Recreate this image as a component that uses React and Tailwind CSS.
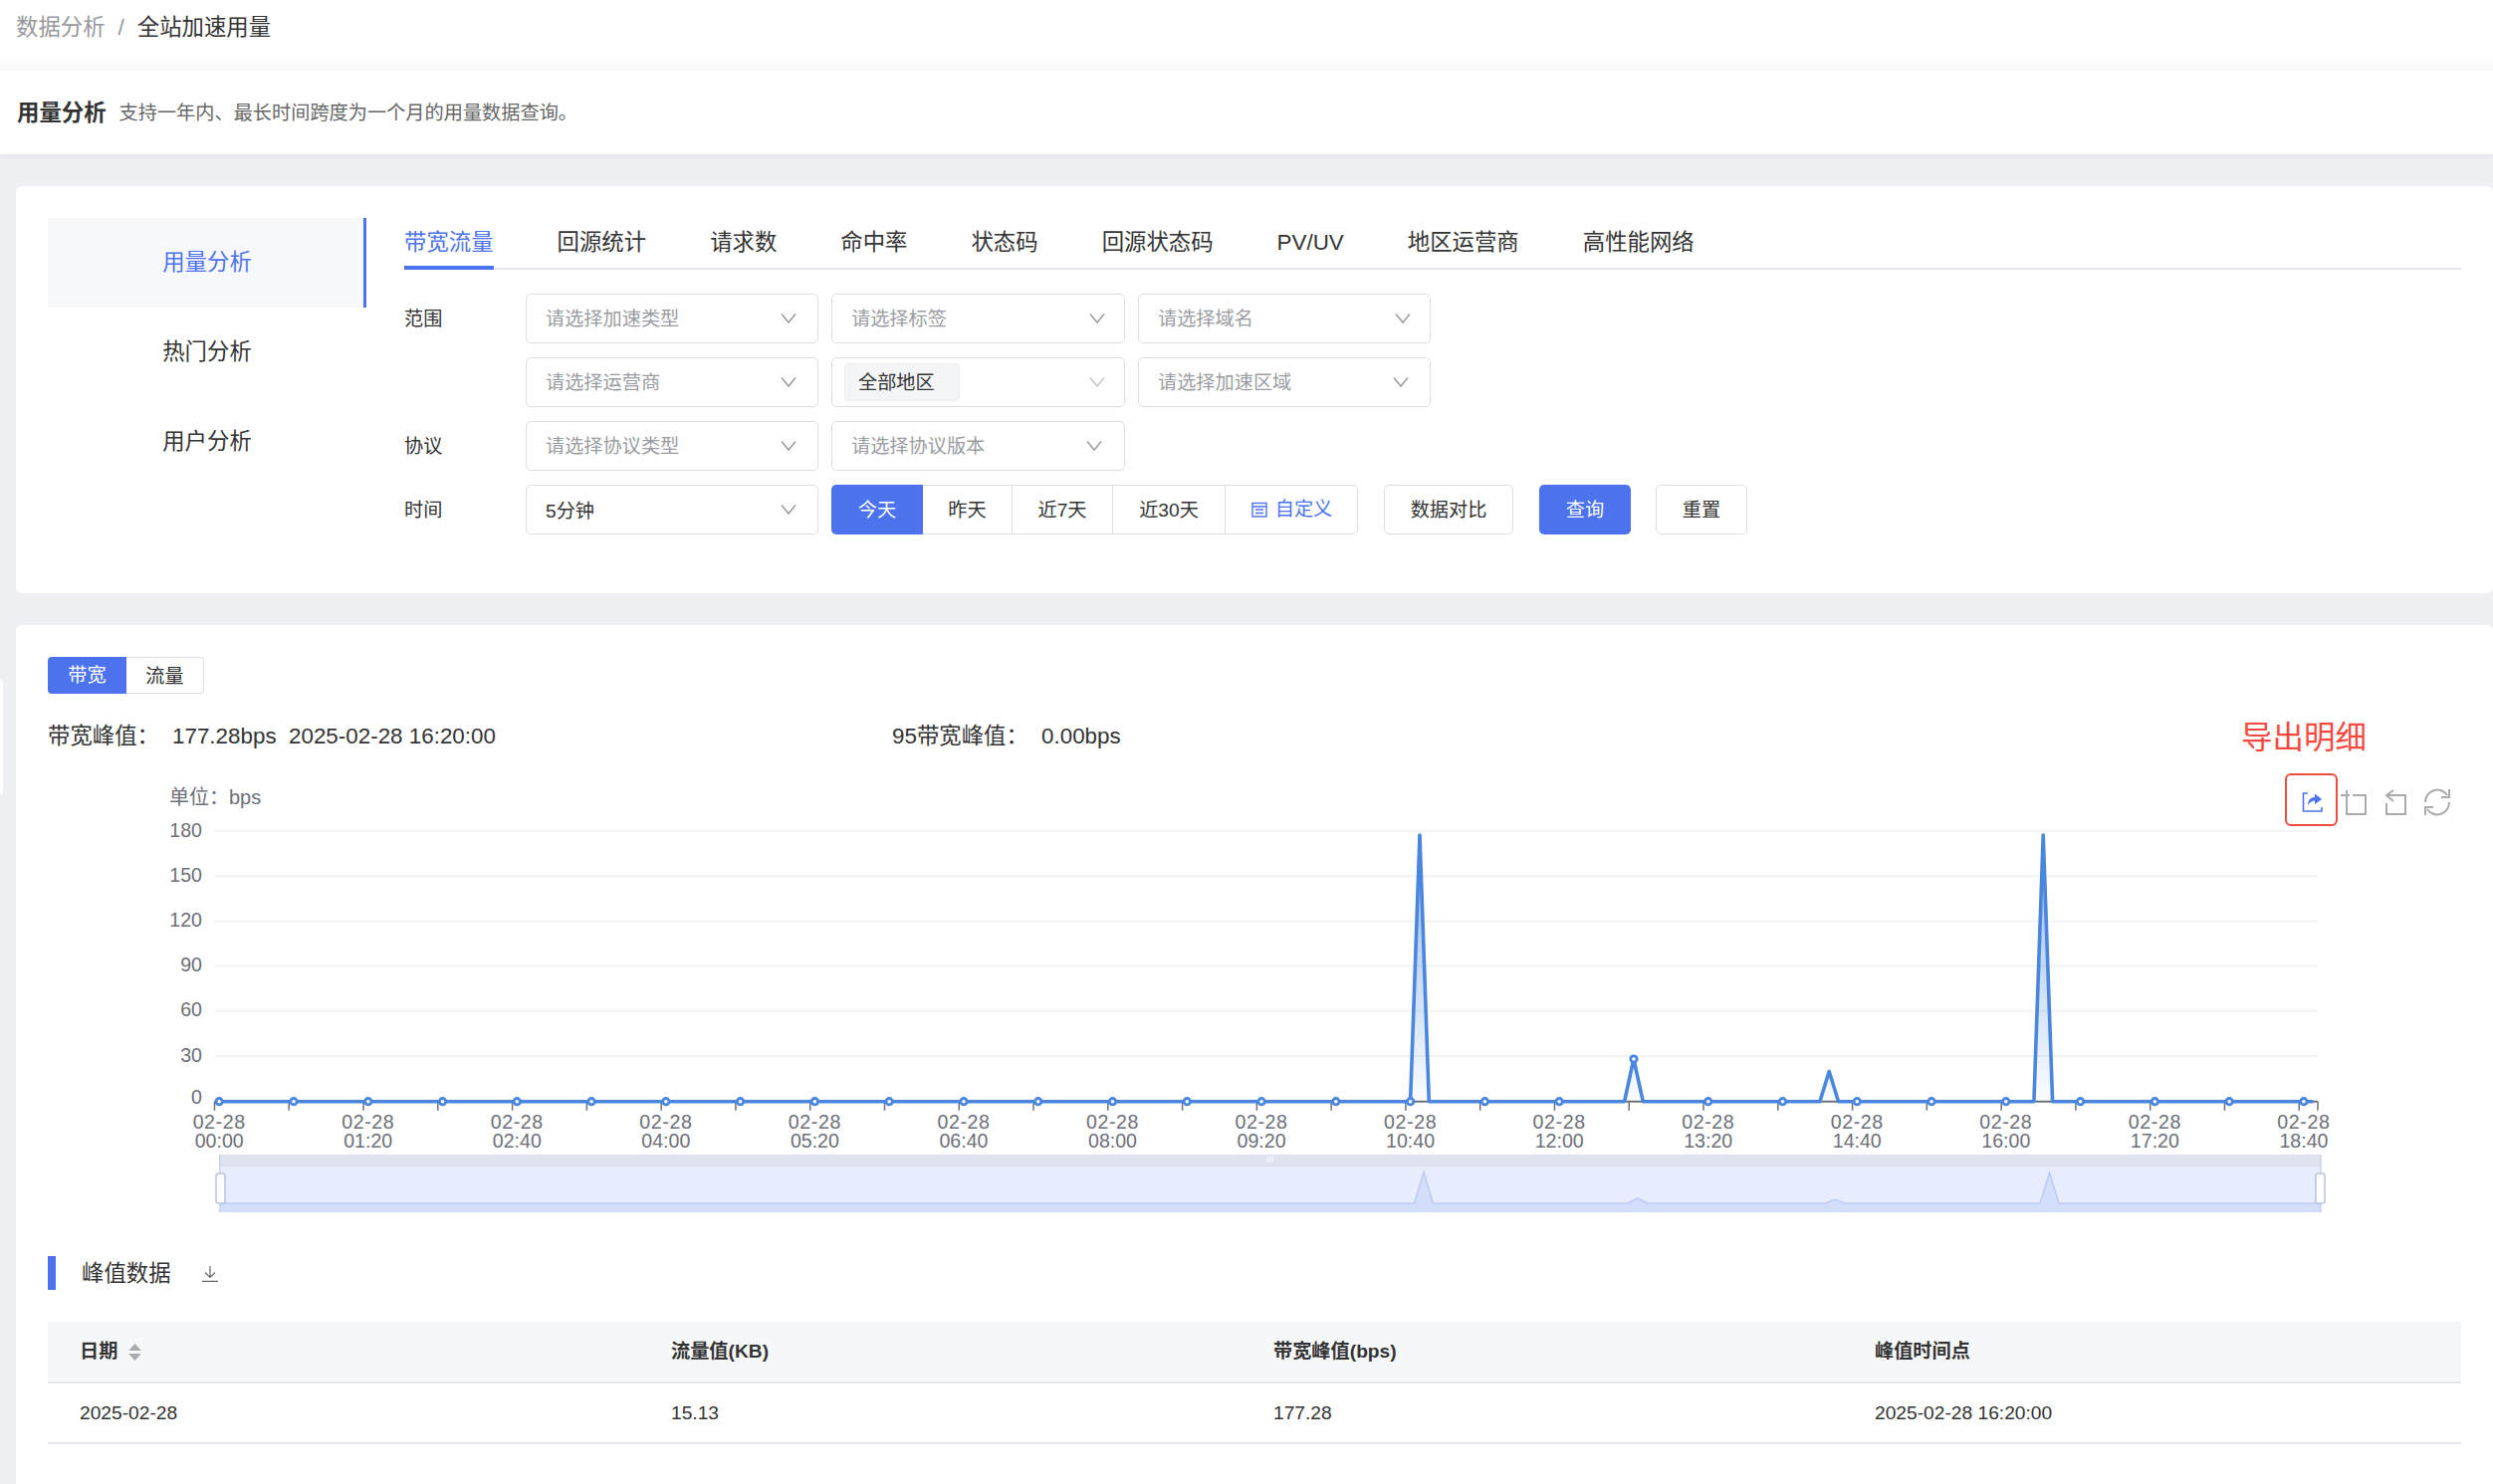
const TABS = ['带宽流量', '回源统计', '请求数', '命中率', '状态码', '回源状态码', 'PV/UV', '地区运营商', '高性能网络'];
const SIDE = ['用量分析', '热门分析', '用户分析'];
const STEP = 9.347;
const X0 = 220.2;
const Y0 = 1106.7;
const PER = 1.5094;
const PEAKS = { 129: 177.28, 152: 28.3, 173: 20, 196: 177.28 };
const YTICKS = [180, 150, 120, 90, 60, 30, 0];
const LABELS = ['00:00', '01:20', '02:40', '04:00', '05:20', '06:40', '08:00', '09:20', '10:40', '12:00', '13:20', '14:40', '16:00', '17:20', '18:40'];

const pts = Array.from({ length: 226 }, (_, i) => [X0 + i * STEP, Y0 - (PEAKS[i] || 0) * PER]);
const linePath = pts.map((p, i) => `${i ? 'L' : 'M'}${p[0].toFixed(1)} ${p[1].toFixed(1)}`).join(' ');
const areaPath = `${linePath} L${pts[225][0].toFixed(1)} ${Y0} L${X0} ${Y0} Z`;

function Chevron({ right = 'mr-[14px]', light }) {
  return (
    <svg viewBox="0 0 18 12" className={`w-[18px] h-[12px] ${right}`} fill="none" stroke={light ? '#c4c6cb' : '#9a9ca1'} strokeWidth="1.5">
      <path d="M2 1.5 L9 10 L16 1.5" />
    </svg>
  );
}

function Select({ text, width = 'w-[295px]', right, value, light, tag }) {
  return (
    <div className={`${width} h-[50px] flex items-center justify-between border border-[#dcdfe6] rounded-[5px] bg-white`}>
      {tag ? (
        <span className="ml-[12px] h-[38px] w-[116px] flex items-center pl-[13px] pt-[2px] rounded-[4px] bg-[#f4f5f7] border border-[#eceef2] text-[#333]">{text}</span>
      ) : (
        <span className={`ml-[19px] ${value ? 'text-[#333] pt-[4px]' : 'text-[#9a9ca1] pt-[2px]'}`}>{text}</span>
      )}
      <Chevron right={right} light={light} />
    </div>
  );
}

function Row({ label, children }) {
  return (
    <div className="flex items-center h-[50px]">
      <span className="w-[122px] text-[#333] pt-[2px]">{label}</span>
      <div className="flex gap-[13px] items-center">{children}</div>
    </div>
  );
}

function Chart() {
  return (
    <svg viewBox="16 770 2488 470" className="block w-[2488px] h-[470px]" fill="none">
      <defs>
        <linearGradient id="areaFill" gradientUnits="userSpaceOnUse" x1="0" y1="839" x2="0" y2="1106">
          <stop offset="0" stopColor="#4a89dc" stopOpacity="0.6" />
          <stop offset="1" stopColor="#4a89dc" stopOpacity="0.03" />
        </linearGradient>
      </defs>
      <text x="170" y="808" fontSize="20" fill="#6e7079">单位：bps</text>
      {YTICKS.map((v, i) => (
        <g key={v}>
          {v > 0 && <line x1="215.5" x2="2328" y1={835 + i * 45.2} y2={835 + i * 45.2} stroke="#f2f3f4" strokeWidth="2" />}
          <text x="203" y={840.5 + i * 45.2 - (v === 0 ? 3 : 0)} fontSize="19.6" fill="#6e7079" textAnchor="end">{v}</text>
        </g>
      ))}
      <line x1="215.5" x2="2328" y1={Y0} y2={Y0} stroke="#6e7079" strokeWidth="2" />
      {Array.from({ length: 29 }, (_, i) => 215.5 + i * 8 * STEP).concat(2328).map((x) => (
        <line key={x} x1={x} x2={x} y1={Y0} y2={Y0 + 9} stroke="#6e7079" strokeWidth="1.5" />
      ))}
      {LABELS.map((t, i) => (
        <text key={t} x={X0 + i * 16 * STEP} fontSize="19.6" fill="#6e7079" textAnchor="middle">
          <tspan x={X0 + i * 16 * STEP} y="1133.5" letterSpacing="0.6">02-28</tspan>
          <tspan x={X0 + i * 16 * STEP} y="1152.5">{t}</tspan>
        </text>
      ))}
      <path d={areaPath} fill="url(#areaFill)" />
      <path d={linePath} stroke="#4a86dd" strokeWidth="3.6" strokeLinejoin="round" />
      {pts.filter((_, i) => i % 8 === 0).map((p) => (
        <circle key={p[0]} cx={p[0]} cy={p[1]} r="3.2" fill="#fff" stroke="#4a86dd" strokeWidth="2.8" />
      ))}

      {/* data zoom */}
      <rect x="220" y="1160" width="2111" height="11" fill="#dee3ef" />
      <rect x="220" y="1171" width="2111" height="47" fill="#e7edfd" />
      <path d="M220 1218 V1209 H1420.5 L1430 1178 L1439.5 1209 H1635 L1645 1204 L1655 1209 H1833 L1843 1205 L1853 1209 H2049 L2058.6 1178 L2068 1209 H2331 V1218 Z" fill="#d3dffa" />
      <path d="M220 1209 H1420.5 L1430 1178 L1439.5 1209 H1635 L1645 1204 L1655 1209 H1833 L1843 1205 L1853 1209 H2049 L2058.6 1178 L2068 1209 H2331" stroke="#bccdf5" strokeWidth="1.6" />
      <line x1="220" x2="2331" y1="1171" y2="1171" stroke="#d6dcec" strokeWidth="1.5" />
      <line x1="221" x2="221" y1="1160" y2="1218" stroke="#cbd3e8" strokeWidth="1.5" />
      <line x1="2331" x2="2331" y1="1160" y2="1218" stroke="#cbd3e8" strokeWidth="1.5" />
      <path d="M1273 1162 V1168 M1275.5 1162 V1168 M1278 1162 V1168" stroke="#fff" strokeWidth="1" />
      <rect x="217" y="1179" width="9" height="30" rx="2.5" fill="#fff" stroke="#b8c4e0" strokeWidth="1.5" />
      <rect x="2326" y="1179" width="9" height="30" rx="2.5" fill="#fff" stroke="#b8c4e0" strokeWidth="1.5" />

      {/* toolbox */}
      <path d="M2318 797 H2313.5 V815 H2332 V811" stroke="#4c73ed" strokeWidth="1.6" />
      <path d="M2318 809 C2318 804 2321 801 2325 801 V797.5 L2332 803 L2325 808 V804.5 C2322 804.5 2320 806 2318 809 Z" fill="#4c73ed" />
      <path d="M2357 794 V818 H2376 V799 H2363 M2351 799 H2360" stroke="#aaa" strokeWidth="2" />
      <path d="M2404 794 L2397 799 L2404 805 M2397 799 H2416 V818 H2397 V807" stroke="#aaa" strokeWidth="2" />
      <path d="M2436 806 A12 12 0 0 1 2458 799 M2460 793 V801 H2452 M2460 806 A12 12 0 0 1 2438 813 M2436 819 V811 H2444" stroke="#aaa" strokeWidth="2" />
    </svg>
  );
}

export default function App() {
  return (
    <div className="relative w-[2504px] h-[1491px] overflow-hidden bg-[#eef0f4] text-[19.2px] leading-[28px] text-[#333] [font-family:'Liberation_Sans','Noto_Sans_CJK_SC',sans-serif]">
      <div className="absolute left-0 top-[683px] w-[3px] h-[115px] bg-white rounded-r-[3px]" />

      <div className="h-[71px] bg-gradient-to-b from-white from-80% to-[#f8f8f8] pl-[16px] pt-[14px] text-[22.4px] flex items-start gap-[13px]">
        <span className="text-[#97989b]">数据分析</span>
        <span className="text-[#97989b]">/</span>
        <span className="text-[#333]">全站加速用量</span>
      </div>

      <div className="h-[84px] bg-white shadow-[0_2px_6px_rgba(0,0,0,0.05)] flex items-center pt-[2px] pl-[17px] gap-[13px]">
        <span className="text-[22.4px] font-bold text-[#333]">用量分析</span>
        <span className="text-[#666]">支持一年内、最长时间跨度为一个月的用量数据查询。</span>
      </div>

      <div className="mt-[32px] ml-[16px] h-[409px] bg-white rounded-[6px] pt-[32px] pl-[32px] pr-[32px] flex">
        <div className="w-[320px] shrink-0 text-[22.4px]">
          {SIDE.map((s, i) => (
            <div key={s} className={`h-[90px] flex items-center justify-center ${i === 0 ? 'bg-[#f7f8fa] text-[#4c73ed] border-r-[3px] border-[#4c73ed] pl-[3px]' : 'text-[#333]'}`}>
              {s}
            </div>
          ))}
        </div>

        <div className="ml-[38px] flex-1">
          <div className="h-[52px] flex gap-[64px] border-b-[2px] border-[#e4e7ed] text-[22.4px]">
            {TABS.map((t, i) => (
              <span key={t} className={`h-[52px] pt-[11px] ${i === 0 ? 'text-[#4c73ed] border-b-[4px] border-[#4c73ed]' : 'text-[#333]'}`}>{t}</span>
            ))}
          </div>

          <div className="mt-[24px] flex flex-col gap-[14px]">
            <Row label="范围">
              <Select width="w-[294px]" text="请选择加速类型" right="mr-[20px]" />
              <Select text="请选择标签" right="mr-[18px]" />
              <Select width="w-[294px]" text="请选择域名" right="mr-[18px]" />
            </Row>
            <Row label="">
              <Select width="w-[294px]" text="请选择运营商" right="mr-[20px]" />
              <Select text="全部地区" tag light right="mr-[18px]" />
              <Select width="w-[294px]" text="请选择加速区域" right="mr-[20px]" />
            </Row>
            <Row label="协议">
              <Select width="w-[294px]" text="请选择协议类型" right="mr-[20px]" />
              <Select text="请选择协议版本" right="mr-[21px]" />
            </Row>
            <Row label="时间">
              <Select width="w-[294px]" text="5分钟" value right="mr-[20px]" />
              <div className="flex h-[50px] text-center leading-[50px]">
                <span className="w-[92px] bg-[#4c73ed] text-white rounded-l-[5px] leading-[52px]">今天</span>
                <span className="w-[90px] border-y border-r border-[#dcdfe6]">昨天</span>
                <span className="w-[101px] border-y border-r border-[#dcdfe6]">近7天</span>
                <span className="w-[113px] border-y border-r border-[#dcdfe6]">近30天</span>
                <span className="w-[133px] border-y border-r border-[#dcdfe6] rounded-r-[5px] flex items-center justify-center gap-[7px] text-[#4c73ed]">
                  <svg viewBox="0 0 18 18" className="w-[18px] h-[18px]" fill="none" stroke="#4c73ed" strokeWidth="1.4">
                    <rect x="2" y="2.5" width="14" height="13.5" />
                    <path d="M2 6 H16 M5 9 H13 M5 12.5 H13" />
                  </svg>
                  自定义
                </span>
              </div>
              <span className="ml-[13px] w-[130px] h-[50px] border border-[#dcdfe6] rounded-[5px] text-center leading-[50px]">数据对比</span>
              <span className="ml-[13px] w-[92px] h-[50px] bg-[#4c73ed] text-white rounded-[5px] text-center leading-[52px]">查询</span>
              <span className="ml-[12px] w-[92px] h-[50px] border border-[#dcdfe6] rounded-[5px] text-center leading-[50px]">重置</span>
            </Row>
          </div>
        </div>
      </div>

      <div className="relative mt-[32px] ml-[16px] h-[900px] bg-white rounded-[6px] pt-[32px]">
        <div className="ml-[32px] flex h-[37px] text-center leading-[37px]">
          <span className="w-[79px] bg-[#4c73ed] text-white rounded-l-[4px]">带宽</span>
          <span className="w-[78px] border-y border-r border-[#dcdfe6] rounded-r-[4px] text-[#333]">流量</span>
        </div>

        <div className="mt-[29px] ml-[32px] h-[28px] flex text-[22.4px] text-[#333]">
          <span className="w-[125px]">带宽峰值：</span>
          <span className="w-[117px]">177.28bps</span>
          <span className="w-[606px]">2025-02-28 16:20:00</span>
          <span className="w-[150px]">95带宽峰值：</span>
          <span>0.00bps</span>
        </div>

        <div className="relative mt-[16px]">
          <Chart />
          <span className="absolute left-[2235px] top-[-45px] text-[31.5px] leading-[32px] text-[#f5483e]">导出明细</span>
          <span className="absolute left-[2279px] top-[7px] w-[53px] h-[53px] border-2 border-[#ee4b43] rounded-[6px]" />
        </div>

        <div className="mt-[22px] ml-[32px] h-[34px] flex items-center">
          <span className="w-[8px] h-[34px] bg-[#4c73ed]" />
          <span className="ml-[26px] pt-[1px] text-[22.4px] text-[#333]">峰值数据</span>
          <svg viewBox="0 0 16 16" className="ml-[31px] w-[16px] h-[16px] mt-[2px]" fill="none" stroke="#666" strokeWidth="1.2">
            <path d="M8 0 V11 M3 6.5 L8 11.5 L13 6.5 M0 15.4 H16" />
          </svg>
        </div>

        <div className="mt-[32px] ml-[32px] w-[2424px]">
          <div className="grid grid-cols-[626px_605px_604px_1fr] h-[62px] items-center bg-[#f6f7f9] border-b-2 border-[#e4e7ed] font-bold text-[#333]">
            <div className="pl-[32px] flex items-center gap-[11px]">
              日期
              <svg viewBox="0 0 12 16" className="w-[13px] h-[17px]" fill="#a8abb2">
                <path d="M6 0 L12 6.5 H0 Z M0 9.5 H12 L6 16 Z" />
              </svg>
            </div>
            <div>流量值(KB)</div>
            <div>带宽峰值(bps)</div>
            <div>峰值时间点</div>
          </div>
          <div className="grid grid-cols-[626px_605px_604px_1fr] h-[61px] items-center border-b-2 border-[#e4e7ed] text-[#333]">
            <div className="pl-[32px]">2025-02-28</div>
            <div>15.13</div>
            <div>177.28</div>
            <div>2025-02-28 16:20:00</div>
          </div>
        </div>
      </div>
    </div>
  );
}
